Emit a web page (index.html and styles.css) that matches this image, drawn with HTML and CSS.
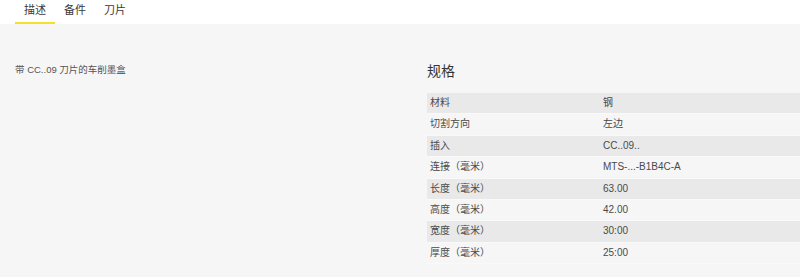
FILE: index.html
```html
<!DOCTYPE html>
<html>
  <head>
    <meta charset="utf-8" />
    <link rel="stylesheet" href="styles.css">
  </head>
  <body>
    <!-- Tabs -->
    <div class="tabs">
      <div class="tab active">描述</div>
      <div class="tab">备件</div>
      <div class="tab">刀片</div>
    </div>

    <div class="content">
      <div class="desc">
        <p class="b1">带 CC..09 刀片的车削墨盒</p>
      </div>

      <!-- Spec table -->
      <div class="specs">
        <p class="h2">规格</p>
        <table class="spec-table">
          <tr><td class="label">材料</td><td>钢</td></tr>
          <tr><td class="label">切割方向</td><td>左边</td></tr>
          <tr><td class="label">插入</td><td>CC..09..</td></tr>
          <tr><td class="label">连接（毫米）</td><td>MTS-...-B1B4C-A</td></tr>
          <tr><td class="label">长度（毫米）</td><td>63.00</td></tr>
          <tr><td class="label">高度（毫米）</td><td>42.00</td></tr>
          <tr><td class="label">宽度（毫米）</td><td>30:00</td></tr>
          <tr><td class="label">厚度（毫米）</td><td>25:00</td></tr>
        </table>
      </div>
    </div>
  </body>
</html>
```

FILE: styles.css
```css
html {
  height: 100%;
}
body {
  margin: 0;
  height: 100%;
  background-color: #f6f6f6;
  font-family: "Liberation Sans", "Noto Sans CJK SC", sans-serif;
  color: #4a4a4a;
}
.tabs {
  display: flex;
  padding: 0 0 0 15px;
  height: 24px;
  background-color: #ffffff;
}
.tab {
  width: 40px;
  text-align: center;
  font-size: 11px;
  line-height: 20px;
  color: #3a3a3a;
  box-sizing: border-box;
  height: 24px;
  border-bottom: 2px solid transparent;
}
.tab.active {
  border-bottom-color: #f5e12b;
}
.content {
  display: flex;
  padding: 37px 0 0 15px;
}
.desc {
  width: 412px;
  flex-shrink: 0;
}
.b1 {
  margin: 2px 0 0 0;
  font-size: 9.5px;
  line-height: 14px;
  color: #555555;
}
.specs {
  flex: 1;
}
.h2 {
  margin: 0 0 12px 0;
  font-size: 14px;
  line-height: 20px;
  color: #333333;
}
.spec-table {
  width: 100%;
  border-collapse: collapse;
  font-size: 10px;
}
.spec-table tr:nth-child(odd) {
  background-color: #e9e9e9;
}
.spec-table td {
  padding: 4px 3px;
  line-height: 12.4px;
  border-bottom: 1px solid #f9f9f9;
  white-space: nowrap;
}
.spec-table td.label {
  width: 167px;
}
```
